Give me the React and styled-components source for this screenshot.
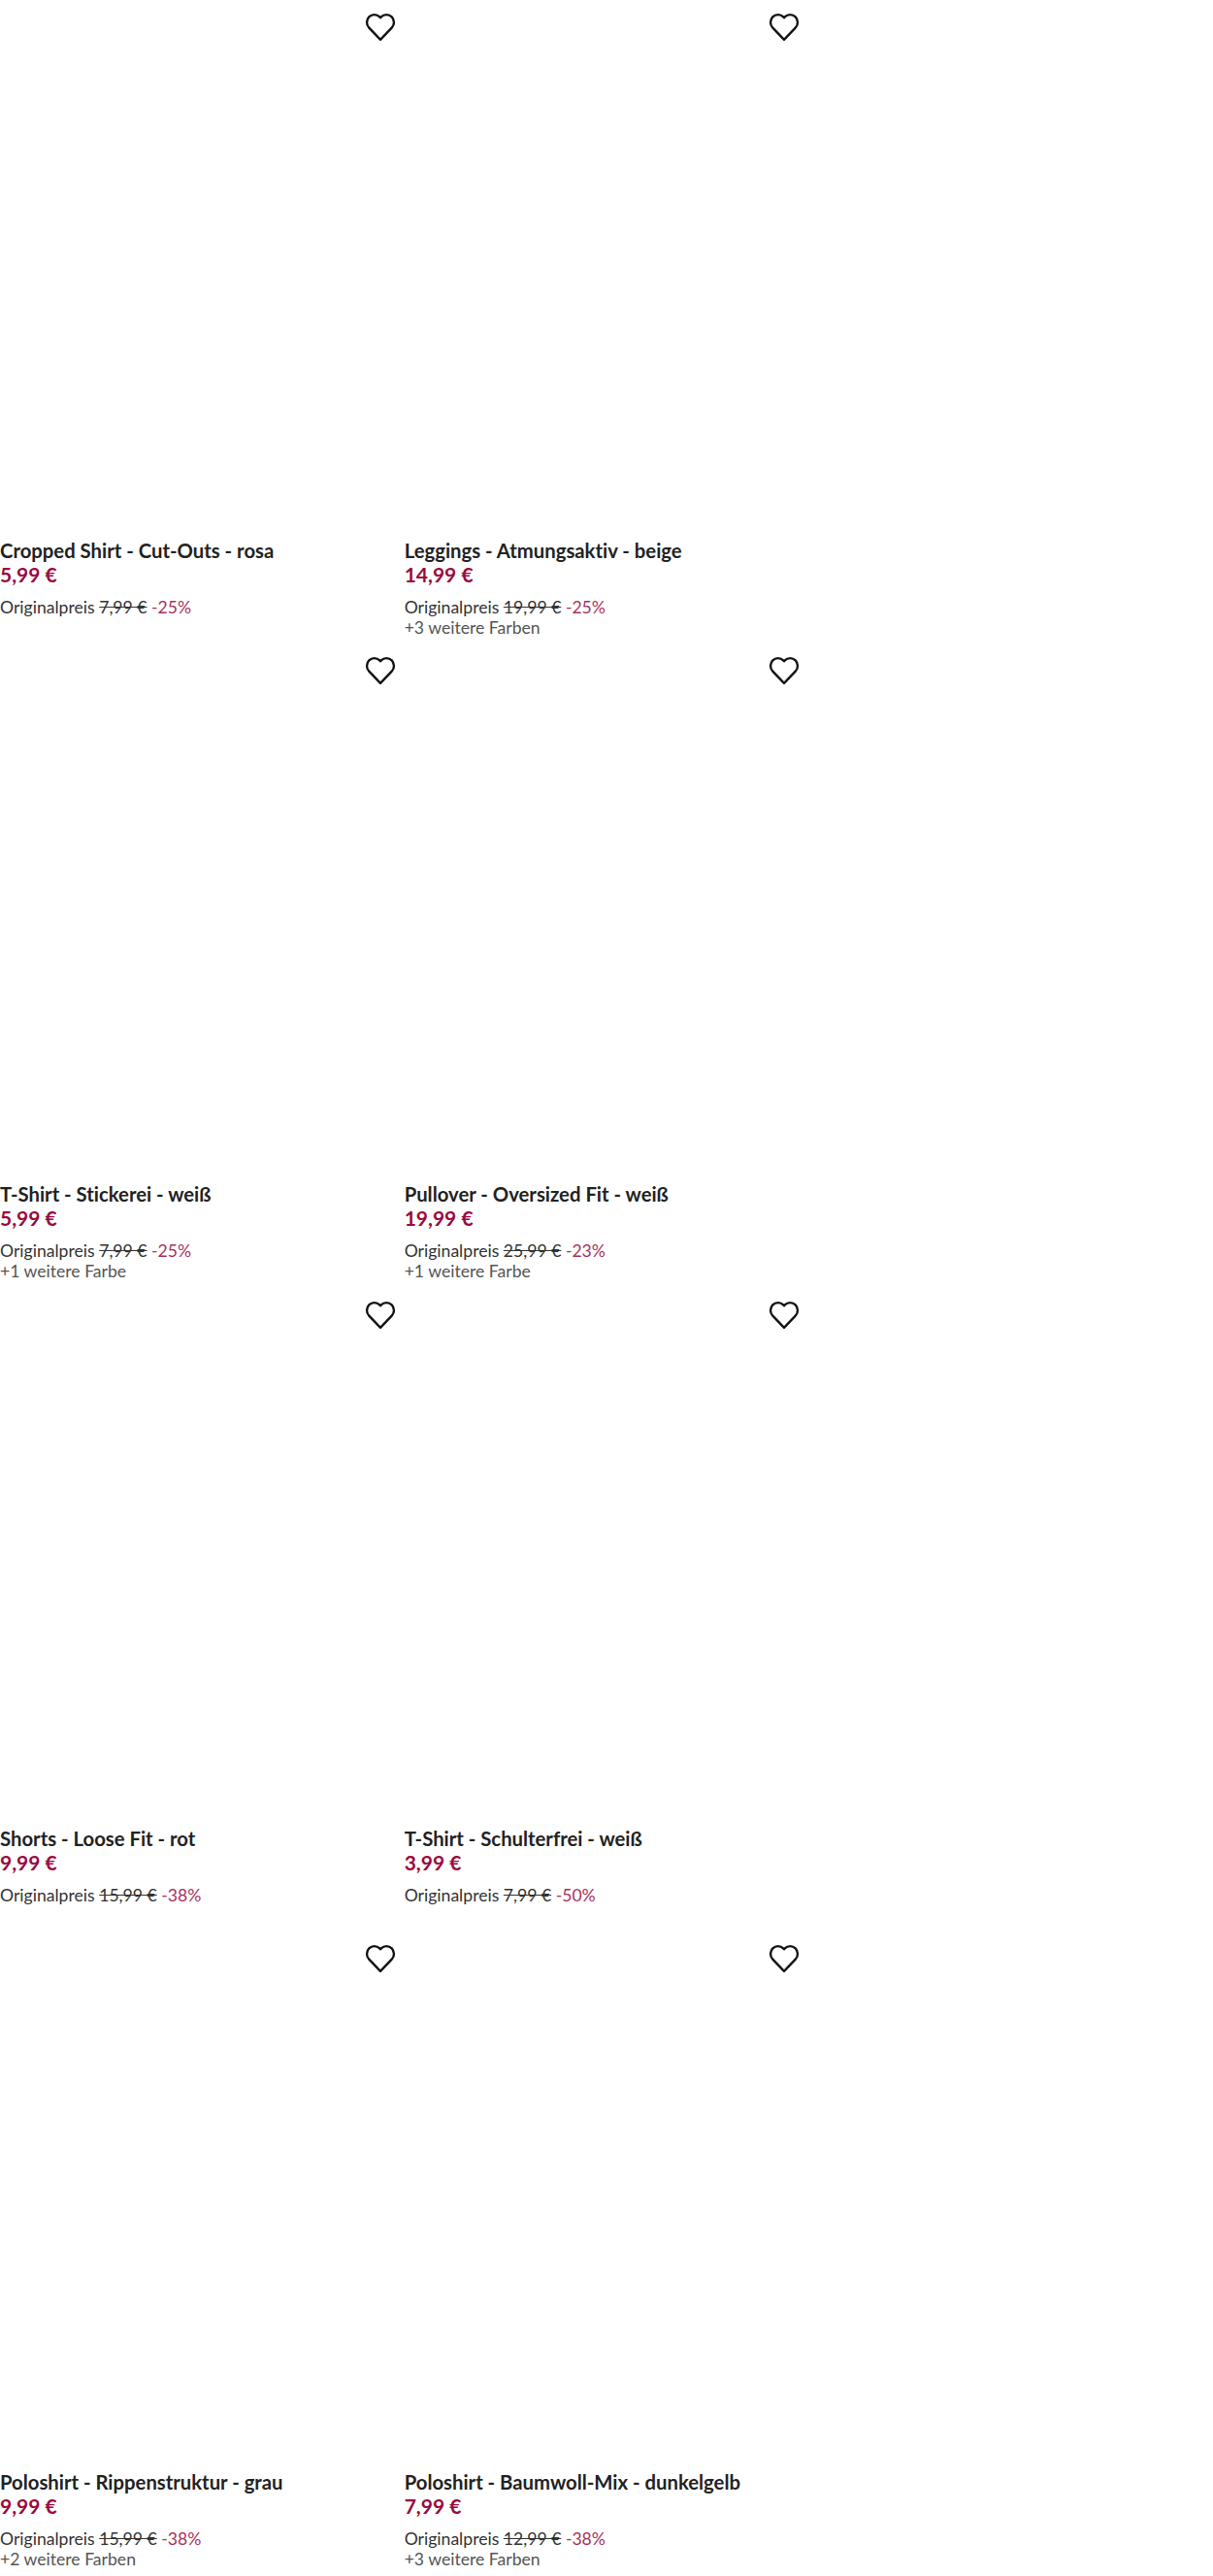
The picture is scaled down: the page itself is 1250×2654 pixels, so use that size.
import styled, { createGlobalStyle } from 'styled-components';

const products = [
  { name: 'Cropped Shirt - Cut-Outs - rosa', price: '5,99 €', original: '7,99 €', discount: '-25%' },
  { name: 'Leggings - Atmungsaktiv - beige', price: '14,99 €', original: '19,99 €', discount: '-25%', colors: '+3 weitere Farben' },
  { name: 'T-Shirt - Stickerei - weiß', price: '5,99 €', original: '7,99 €', discount: '-25%', colors: '+1 weitere Farbe' },
  { name: 'Pullover - Oversized Fit - weiß', price: '19,99 €', original: '25,99 €', discount: '-23%', colors: '+1 weitere Farbe' },
  { name: 'Shorts - Loose Fit - rot', price: '9,99 €', original: '15,99 €', discount: '-38%' },
  { name: 'T-Shirt - Schulterfrei - weiß', price: '3,99 €', original: '7,99 €', discount: '-50%' },
  { name: 'Poloshirt - Rippenstruktur - grau', price: '9,99 €', original: '15,99 €', discount: '-38%', colors: '+2 weitere Farben' },
  { name: 'Poloshirt - Baumwoll-Mix - dunkelgelb', price: '7,99 €', original: '12,99 €', discount: '-38%', colors: '+3 weitere Farben' },
];

function Heart() {
  return (
    <svg width="36" height="36" viewBox="0 0 32 32" fill="none" stroke="#111" strokeWidth="2.1" strokeLinejoin="round">
      <path d="M16 27.5 5.6 16.6a7.2 7.2 0 0 1 0-10 6.8 6.8 0 0 1 9.7 0l.7.8.7-.8a6.8 6.8 0 0 1 9.7 0 7.2 7.2 0 0 1 0 10Z" />
    </svg>
  );
}

export default function App() {
  return (
    <Grid>
      <GlobalStyle />
      {products.map((p) => (
        <Card key={p.name}>
          <ImageArea>
            <WishButton aria-label="Merken"><Heart /></WishButton>
          </ImageArea>
          <Name>{p.name}</Name>
          <Price>{p.price}</Price>
          <Original>
            Originalpreis <s>{p.original}</s> <Discount>{p.discount}</Discount>
          </Original>
          {p.colors && <MoreColors>{p.colors}</MoreColors>}
        </Card>
      ))}
    </Grid>
  );
}

const GlobalStyle = createGlobalStyle`
  html, body {
    margin: 0;
    background: #fff;
  }

  body {
    font-family: "Lato", "Open Sans", sans-serif;
    font-variant-ligatures: none;
  }
`;

const Grid = styled.div`
  display: grid;
  grid-template-columns: repeat(2, 416.67px);
  grid-auto-rows: 663.4px;
  height: 2654px;
`;

const Card = styled.article`
  display: flex;
  flex-direction: column;
  padding-right: 8px;
`;

const ImageArea = styled.div`
  position: relative;
  height: 555px;
`;

const WishButton = styled.button`
  position: absolute;
  top: 10px;
  right: -1px;
  width: 36px;
  height: 36px;
  padding: 0;
  border: none;
  background: none;
`;

const Name = styled.h3`
  margin: 0;
  font-size: 20.3px;
  line-height: 25px;
  font-weight: 700;
  color: #222;
`;

const Price = styled.div`
  font-size: 21px;
  line-height: 24px;
  font-weight: 700;
  color: #9b0a3c;
`;

const Original = styled.div`
  margin-top: 11px;
  font-size: 17.6px;
  line-height: 21px;
  color: #333;
`;

const Discount = styled.span`
  color: #a6325c;
`;

const MoreColors = styled.div`
  font-size: 17.6px;
  line-height: 21px;
  color: #555;
`;
